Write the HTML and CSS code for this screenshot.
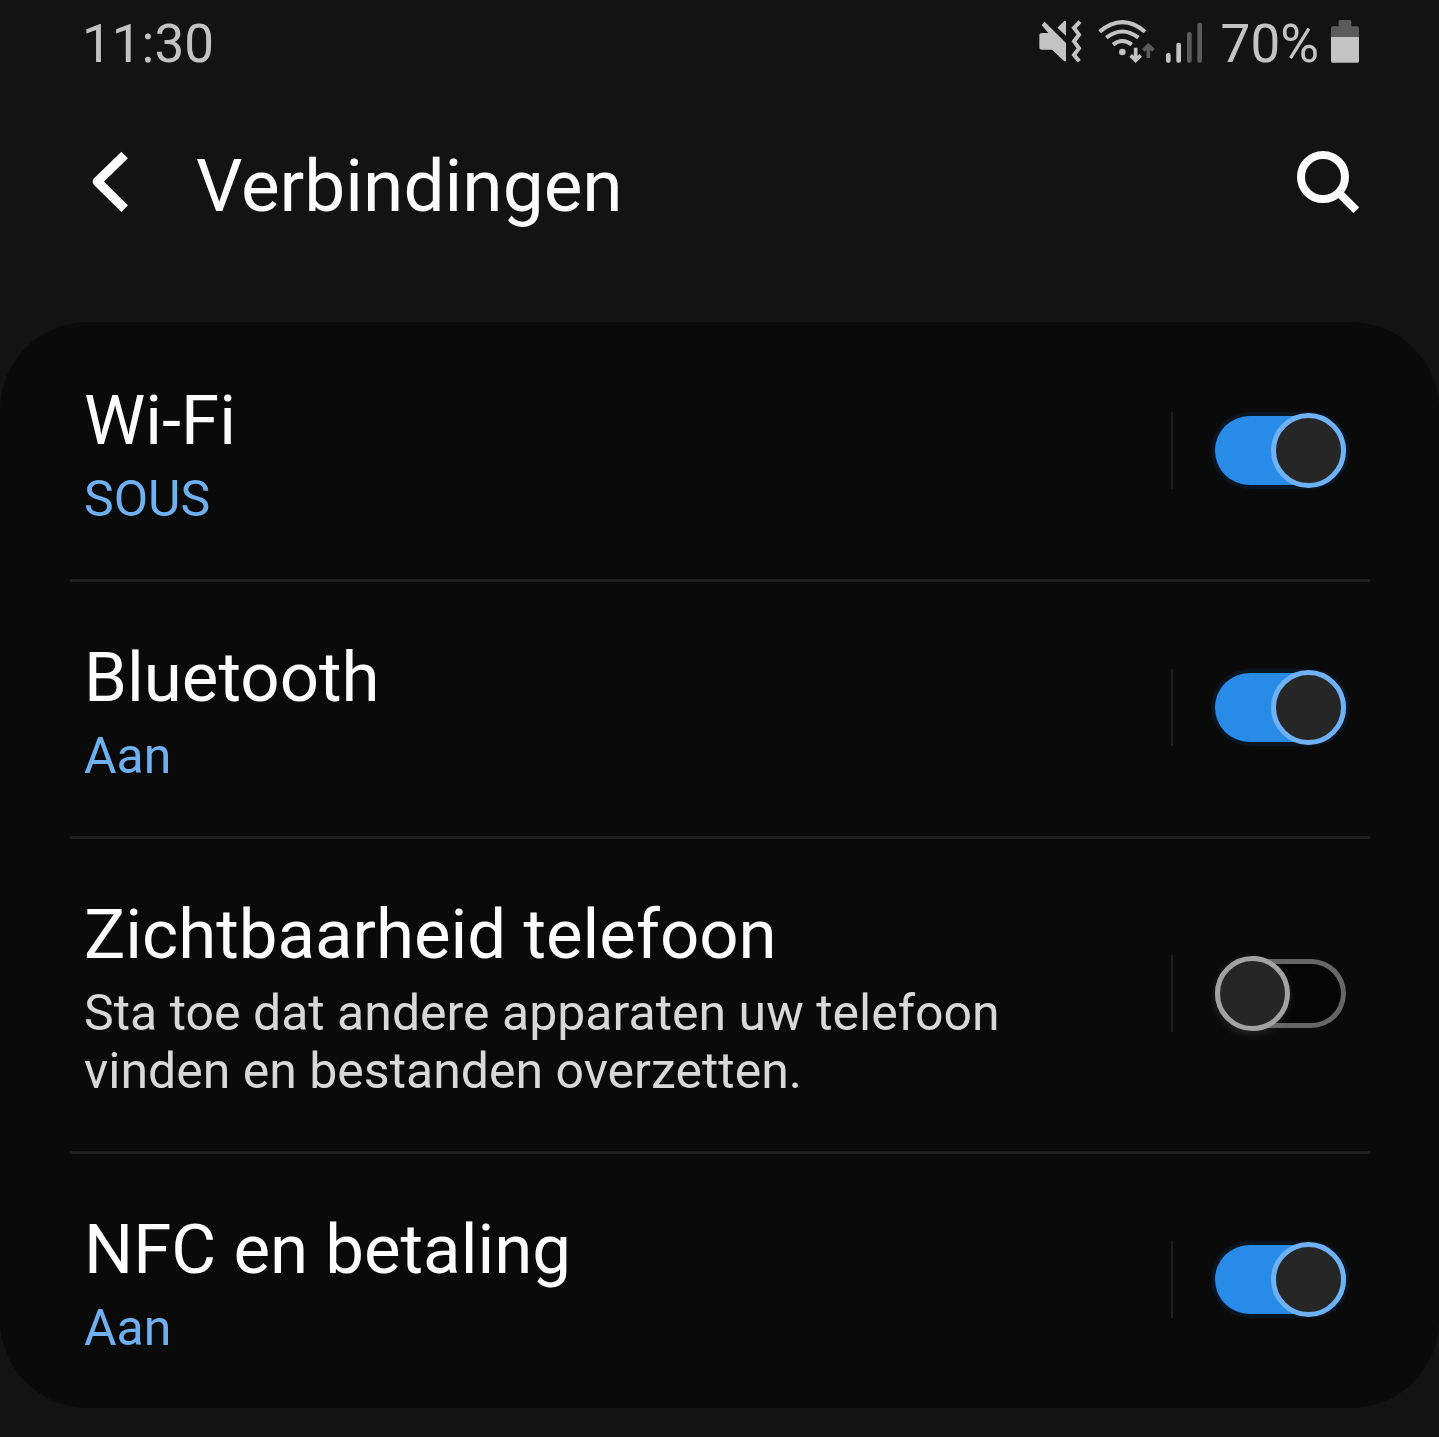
FILE: index.html
```html
<!DOCTYPE html>
<html lang="nl">
<head>
<meta charset="utf-8">
<meta name="viewport" content="width=device-width, initial-scale=1">
<title>Verbindingen</title>
<link rel="stylesheet" href="styles.css">
</head>
<body>
<div class="status-bar">
  <time class="clock">11:30</time>
  <div class="status-icons">
    <svg class="icon-mute" viewBox="57 60 129 129" aria-hidden="true">
      <path class="fill" d="M65 99H85L65 75L74 65L138 129V184H133L96 149H65Q58 149 58 141V107Q58 99 65 99Z"/>
      <path class="fill" d="M112 83L133 63H138V107Z"/>
      <path class="line" stroke-width="12" d="M180 65L162 84L177 104L162 124L177 145L162 165L178 184"/>
    </svg>
    <svg class="icon-wifi" viewBox="234 60 171 129" aria-hidden="true">
      <path class="line" stroke-width="12" d="M239 95Q307 38 375 95M259 113Q307 76 355 113M279 134Q307 112 335 134"/>
      <circle class="fill" cx="307" cy="156" r="10"/>
      <path class="line" stroke-width="11" d="M347 143V178M332 166L347 181L362 166"/>
      <path class="line dim" stroke-width="11" d="M385 174V138M370 151L385 136L400 151"/>
    </svg>
    <svg class="icon-signal" viewBox="438 60 111 129" aria-hidden="true">
      <rect class="fill" x="438" y="159" width="14" height="29" rx="6"/>
      <rect class="fill" x="469" y="128" width="14" height="60" rx="6"/>
      <rect class="fill dim" x="501" y="96" width="14" height="92" rx="6"/>
      <rect class="fill dim" x="532" y="68" width="14" height="120" rx="6"/>
    </svg>
    <span class="battery-level">70%</span>
    <svg class="icon-battery" viewBox="393 60 84 129" aria-hidden="true">
      <path class="fill dim" d="M393 112V84Q393 79 398 79H416V64Q416 60 420 60H450Q454 60 454 64V79H472Q477 79 477 84V112Z"/>
      <path class="fill" d="M393 111H477V183Q477 188 472 188H398Q393 188 393 183Z"/>
    </svg>
  </div>
</div>

<header class="app-bar">
  <button class="icon-button" type="button" aria-label="Terug">
    <svg class="icon-back" viewBox="60 60 120 186" aria-hidden="true">
      <path d="M164 72L82 152L164 233"/>
    </svg>
  </button>
  <h1 class="title">Verbindingen</h1>
  <button class="icon-button" type="button" aria-label="Zoeken">
    <svg class="icon-search" viewBox="81 63 186 186" aria-hidden="true">
      <circle cx="159" cy="141" r="66"/>
      <path d="M206 188L259 241"/>
    </svg>
  </button>
</header>

<main class="card">
  <div class="row">
    <label class="text" for="wifi">
      <span class="name">Wi-Fi</span>
      <span class="detail active">SOUS</span>
    </label>
    <div class="control"><input class="switch" type="checkbox" id="wifi" checked></div>
  </div>
  <div class="row">
    <label class="text" for="bluetooth">
      <span class="name">Bluetooth</span>
      <span class="detail active">Aan</span>
    </label>
    <div class="control"><input class="switch" type="checkbox" id="bluetooth" checked></div>
  </div>
  <div class="row">
    <label class="text" for="visibility">
      <span class="name">Zichtbaarheid telefoon</span>
      <span class="detail">Sta toe dat andere apparaten uw telefoon vinden en bestanden overzetten.</span>
    </label>
    <div class="control"><input class="switch" type="checkbox" id="visibility"></div>
  </div>
  <div class="row">
    <label class="text" for="nfc">
      <span class="name">NFC en betaling</span>
      <span class="detail active">Aan</span>
    </label>
    <div class="control"><input class="switch" type="checkbox" id="nfc" checked></div>
  </div>
</main>
</body>
</html>
```
FILE: styles.css
```css
*,
*::before {
  box-sizing: border-box;
}

body {
  margin: 0;
  background: #131313;
  color: #fcfcfc;
  font-family: Roboto, "Liberation Sans", sans-serif;
}

svg {
  display: block;
  flex: none;
}

/* Status bar */
.status-bar {
  display: flex;
  justify-content: space-between;
  padding: 20px 80px 0 82px;
  color: #c3c3c3;
  font-size: 53px;
  line-height: 48px;
}

.status-icons {
  display: flex;
  align-items: flex-start;
}

.fill {
  fill: #c3c3c3;
}

.fill.dim {
  fill: #5b5b5b;
}

.line {
  fill: none;
  stroke: #c3c3c3;
}

.line.dim {
  stroke: #5b5b5b;
}

.icon-mute,
.icon-wifi,
.icon-signal,
.icon-battery {
  height: 43px;
}

.icon-mute {
  width: 43px;
  margin-right: 16px;
}

.icon-wifi {
  width: 57px;
  margin-right: 11px;
}

.icon-signal {
  width: 37px;
  margin-right: 18px;
}

.icon-battery {
  width: 28px;
  margin-left: 12px;
}

/* App bar */
.app-bar {
  display: flex;
  align-items: flex-start;
  padding: 76px 80px 94px 84px;
}

.icon-button {
  display: flex;
  align-items: center;
  justify-content: center;
  min-width: 52px;
  height: 76px;
  padding: 0;
  border: 0;
  background: none;
}

.icon-button svg {
  fill: none;
  stroke: #fcfcfc;
  stroke-width: 24;
}

.icon-button .icon-back {
  width: 40px;
  height: 62px;
  stroke-width: 28;
  stroke-linejoin: round;
}

.icon-search {
  width: 62px;
  height: 62px;
}

.title {
  flex: 1;
  margin: 0 60px;
  font-size: 73px;
  font-weight: 400;
  line-height: 84px;
}

/* Settings list */
.card {
  padding: 3px 69px 0 70px;
  border-radius: 88px;
  background: #0a0a0a;
}

.row {
  display: flex;
  align-items: center;
  padding: 54px 24px 51px 14px;
}

.row + .row {
  border-top: 3px solid #1e1e1e;
}

.text {
  display: flex;
  flex: 1;
  flex-direction: column;
  gap: 7px;
  padding-right: 42px;
}

.name {
  font-size: 69px;
  line-height: 84px;
}

.detail {
  color: #d8d8d8;
  font-size: 50px;
  line-height: 58px;
}

.detail.active {
  color: #6eb0f0;
}

.control {
  display: flex;
  align-items: center;
  height: 77px;
  margin-bottom: 6px;
  padding-left: 42px;
  border-left: 2px solid #1e1e1e;
}

.switch {
  display: flex;
  align-items: center;
  appearance: none;
  width: 131px;
  height: 69px;
  margin: 0;
  border-radius: 35px;
  background: #050505;
  box-shadow: inset 0 0 0 5px #666;
}

.switch::before {
  content: "";
  flex: none;
  width: 75px;
  height: 75px;
  border: 5px solid #a2a2a2;
  border-radius: 50%;
  background: #262626;
  box-shadow: 0 3px 8px rgba(160, 160, 160, 0.2);
}

.switch:checked {
  justify-content: flex-end;
  background: #288be8;
  box-shadow: 0 0 0 4px #0a1521;
}

.switch:checked::before {
  border-color: #6eb2f5;
  box-shadow: none;
}
```
